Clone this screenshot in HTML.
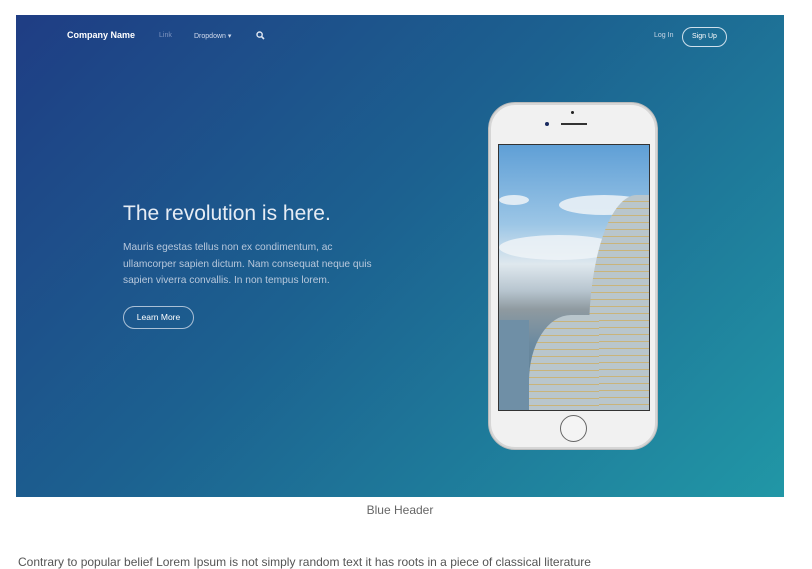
<!DOCTYPE html>
<html><head><style>
*{margin:0;padding:0;box-sizing:border-box}
body{width:812px;height:560px;overflow:hidden;background:#fff;font-family:"Liberation Sans",sans-serif;position:relative}
.hero{position:absolute;left:16px;top:15px;width:768px;height:482px;background:linear-gradient(135deg,#1f3d84 0%,#1c6190 45%,#2197a6 100%);overflow:hidden}
.a{position:absolute;color:#fff;white-space:nowrap}
.phone{position:absolute;left:473px;top:88px;width:168px;height:346px;border-radius:26px;background:#f1f1f1;border:2px solid #d6d6d6;box-shadow:0 0 0 1px #bbb}
.screen{position:absolute;left:7px;top:39px;width:152px;height:267px;border:1px solid #333;overflow:hidden;
background:linear-gradient(180deg,#5f9fd6 0%,#9cc6e6 30%,#dfe8ee 45%,#b7c5cf 55%,#8f9aa0 62%,#6b8aa0 75%,#587a90 100%)}
.bld{position:absolute;border-radius:60% 0 0 0;background:repeating-linear-gradient(180deg,#b9c6cc 0 6px,#c9b47a 6px 7px);}
.cl{position:absolute;background:#eef3f7;border-radius:50%;opacity:.85}
</style></head><body>
<div class="hero">
 <div class="a" style="left:51px;top:15px;font-size:9px;font-weight:bold">Company Name</div>
 <div class="a" style="left:143px;top:17px;font-size:7px;color:#7f95c0">Link</div>
 <div class="a" style="left:178px;top:17px;font-size:7px;color:#d4dcee">Dropdown ▾</div>
 <svg style="position:absolute;left:240px;top:16px" width="9" height="9" viewBox="0 0 9 9"><circle cx="3.6" cy="3.6" r="2.6" stroke="#dfe6f2" stroke-width="1.4" fill="none"/><path d="M5.5 5.5L8 8" stroke="#dfe6f2" stroke-width="1.6"/></svg>
 <div class="a" style="left:638px;top:17px;font-size:7px;color:#c8d6e6">Log In</div>
 <div class="a" style="left:666px;top:12px;width:45px;height:20px;border:1px solid #cfe0ec;border-radius:10px;font-size:7px;text-align:center;line-height:18px">Sign Up</div>
 <div class="a" style="left:107px;top:187px;font-size:21px;color:#e6ecf4">The revolution is here.</div>
 <div class="a" style="left:107px;top:225px;font-size:10.2px;line-height:16.5px;color:#b8c8dc">Mauris egestas tellus non ex condimentum, ac<br>ullamcorper sapien dictum. Nam consequat neque quis<br>sapien viverra convallis. In non tempus lorem.</div>
 <div class="a" style="left:107px;top:291px;width:71px;height:23px;border:1px solid #aac0d6;border-radius:12px;font-size:8.5px;text-align:center;line-height:21px">Learn More</div>
 <div class="phone">
  <div style="position:absolute;left:80px;top:6px;width:3px;height:3px;border-radius:50%;background:#222"></div>
  <div style="position:absolute;left:54px;top:17px;width:4px;height:4px;border-radius:50%;background:#1a2a60"></div>
  <div style="position:absolute;left:70px;top:18px;width:26px;height:2px;background:#333"></div>
  <div class="screen">
   <div class="cl" style="left:60px;top:50px;width:90px;height:20px"></div>
   <div class="cl" style="left:0;top:50px;width:30px;height:10px"></div>
   <div class="cl" style="left:0;top:90px;width:120px;height:25px"></div>
   <div class="bld" style="left:90px;top:50px;width:80px;height:230px"></div>
   <div class="bld" style="left:30px;top:170px;width:70px;height:110px"></div>
   <div style="position:absolute;left:0;top:175px;width:30px;height:90px;background:#6f8fa6"></div>
  </div>
  <div style="position:absolute;left:69px;top:310px;width:27px;height:27px;border-radius:50%;border:1px solid #666;background:#f4f4f4"></div>
 </div>
</div>
<div class="a" style="left:0;width:800px;text-align:center;top:503px;font-size:12px;color:#666">Blue Header</div>
<div class="a" style="left:18px;top:555px;font-size:12px;color:#555">Contrary to popular belief Lorem Ipsum is not simply random text it has roots in a piece of classical literature</div>
</body></html>
